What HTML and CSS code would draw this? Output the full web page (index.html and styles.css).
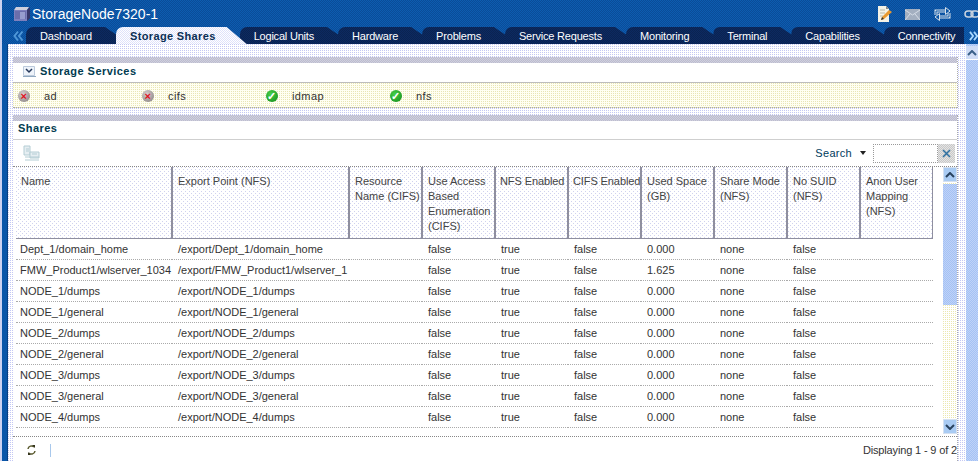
FILE: index.html
```html
<!DOCTYPE html>
<html lang="en">
<head>
<meta charset="utf-8">
<title>StorageNode7320-1</title>
<link rel="stylesheet" href="styles.css">
</head>
<body>
<div class="page">
  <header class="header">
    <div class="titlebar">
      <svg class="title-icon" width="18" height="16" viewBox="0 0 18 16"><path d="M1 4h13v11H1z" fill="#7d80bd"/><path d="M2 6h11M2 8h11M2 10h11M2 12h11" stroke="#5a5d9a"/><path d="M3 1h13l-2 3H1z" fill="#cfcfdc"/><path d="M14 4l3-3v11l-3 3z" fill="#35376a"/><path d="M7 6h5v7H7z" fill="#aab0dd" opacity=".7"/></svg>
      <h1 class="title">StorageNode7320-1</h1>
      <div class="title-tools">
        <svg width="16" height="18" viewBox="0 0 16 18"><path d="M1 1h8l3 3v13H1z" fill="#f4f2e6"/><path d="M9 1v3h3" fill="#888"/><path d="M3 5h5M3 8h5M3 11h3" stroke="#b8b8a8"/><path d="M4 15l1-3 7-7 3 2-8 7z" fill="#e89a30"/><path d="M4 15l1-3 2 2z" fill="#333"/></svg>
        <svg class="tool-mail" width="15" height="11" viewBox="0 0 15 11"><path d="M0 0h15v11H0z" fill="#a3afc0"/><path d="M0 1l7.500 5L15 1M0 11l5-6M15 11l-5-6" fill="none" stroke="#d4dce6"/></svg>
        <svg class="tool-sync" width="17" height="14" viewBox="0 0 17 14"><path d="M2 8V4h10M15 6v4H5" fill="none" stroke="#d6e0ea" stroke-width="3"/><path d="M2 8V4h10M15 6v4H5" fill="none" stroke="#0c56a6"/><path d="M11.500.500L16 4l-4.500 3.500zM5.500 6.500L1 10l4.500 3.500z" fill="#0c56a6" stroke="#d6e0ea"/></svg>
        <svg class="tool-link" width="14" height="8" viewBox="0 0 14 8"><rect x="1" y="1" width="8" height="6" rx="3" fill="none" stroke="#c9d3df" stroke-width="1.500"/><rect x="7" y="1" width="8" height="6" rx="3" fill="none" stroke="#c9d3df" stroke-width="1.500"/></svg>
      </div>
    </div>
    <nav class="tabbar">
      <svg class="tab-arrow" width="12" height="12" viewBox="0 0 12 12"><path d="M6 1.500L2.500 6 6 10.500M10.500 1.500L7 6l3.500 4.500" fill="none" stroke="#4f97d8" stroke-width="2"/></svg>
      <div class="tabs">
        <a class="tab">Dashboard</a>
        <a class="tab active">Storage Shares</a>
        <a class="tab">Logical Units</a>
        <a class="tab">Hardware</a>
        <a class="tab">Problems</a>
        <a class="tab">Service Requests</a>
        <a class="tab">Monitoring</a>
        <a class="tab">Terminal</a>
        <a class="tab">Capabilities</a>
        <a class="tab last">Connectivity</a>
      </div>
      <svg class="tab-arrow next" width="10" height="12" viewBox="0 0 11 12"><path d="M1 1.500L4.500 6 1 10.500M5.500 1.500L9 6l-3.500 4.500" fill="none" stroke="#a8d8ff" stroke-width="2"/></svg>
    </nav>
  </header>

  <div class="workspace">
    <div class="rail"></div>
    <main class="content">
      <section class="panel services">
        <div class="panel-cap"></div>
        <div class="panel-head">
          <svg class="collapse" width="13" height="11" viewBox="0 0 13 11"><path d="M.500.500h11v9H.500z" fill="#eef3fa" stroke="#bccadc"/><path d="M0 10.500h13" stroke="#8fa8c0"/><path d="M3 3l3 3 3-3" fill="none" stroke="#25385a" stroke-width="1.500"/></svg>
          <h2 class="panel-title">Storage Services</h2>
        </div>
        <div class="service-row">
          <div class="service"><span class="dot bad"><i>×</i></span>ad</div>
          <div class="service"><span class="dot bad"><i>×</i></span>cifs</div>
          <div class="service"><span class="dot ok"><i>✓</i></span>idmap</div>
          <div class="service"><span class="dot ok"><i>✓</i></span>nfs</div>
        </div>
      </section>

      <section class="panel shares">
        <div class="panel-cap"></div>
        <div class="panel-head shares-head"><h2 class="panel-title">Shares</h2></div>
        <div class="toolbar">
          <svg class="tool-icon" width="17" height="16" viewBox="0 0 17 16"><path d="M1 1h6v9H1z" fill="#e6eef2" stroke="#b4cdd4"/><path d="M7 7h9v6H7z" fill="#e6eef2" stroke="#b4cdd4"/><path d="M2 12h14M2 15h14M3 4h3M3 6h3M9 9h5" stroke="#b4cdd4"/></svg>
          <span class="search-label">Search</span>
          <span class="caret"></span>
          <span class="search-box"></span>
          <span class="search-clear"><svg width="9" height="9" viewBox="0 0 9 9"><path d="M1 1l7 7M8 1L1 8" stroke="#2f6f9f" stroke-width="1.600"/></svg></span>
        </div>
        <div class="table-area">
          <div class="table-wrap">
            <table class="grid">
              <colgroup>
                <col class="c-name"><col class="c-export"><col class="c-std"><col class="c-std"><col class="c-std"><col class="c-std"><col class="c-std"><col class="c-std"><col class="c-std"><col class="c-std">
              </colgroup>
              <thead>
                <tr>
                  <th>Name</th><th>Export Point (NFS)</th><th>Resource Name (CIFS)</th><th>Use Access Based Enumeration (CIFS)</th><th class="one-line">NFS Enabled</th><th class="one-line">CIFS Enabled</th><th>Used Space (GB)</th><th>Share Mode (NFS)</th><th>No SUID (NFS)</th><th>Anon User Mapping (NFS)</th>
                </tr>
              </thead>
              <tbody>
                <tr><td>Dept_1/domain_home</td><td>/export/Dept_1/domain_home</td><td></td><td>false</td><td>true</td><td>false</td><td>0.000</td><td>none</td><td>false</td><td></td></tr>
                <tr><td>FMW_Product1/wlserver_1034</td><td>/export/FMW_Product1/wlserver_1</td><td></td><td>false</td><td>true</td><td>false</td><td>1.625</td><td>none</td><td>false</td><td></td></tr>
                <tr><td>NODE_1/dumps</td><td>/export/NODE_1/dumps</td><td></td><td>false</td><td>true</td><td>false</td><td>0.000</td><td>none</td><td>false</td><td></td></tr>
                <tr><td>NODE_1/general</td><td>/export/NODE_1/general</td><td></td><td>false</td><td>true</td><td>false</td><td>0.000</td><td>none</td><td>false</td><td></td></tr>
                <tr><td>NODE_2/dumps</td><td>/export/NODE_2/dumps</td><td></td><td>false</td><td>true</td><td>false</td><td>0.000</td><td>none</td><td>false</td><td></td></tr>
                <tr><td>NODE_2/general</td><td>/export/NODE_2/general</td><td></td><td>false</td><td>true</td><td>false</td><td>0.000</td><td>none</td><td>false</td><td></td></tr>
                <tr><td>NODE_3/dumps</td><td>/export/NODE_3/dumps</td><td></td><td>false</td><td>true</td><td>false</td><td>0.000</td><td>none</td><td>false</td><td></td></tr>
                <tr><td>NODE_3/general</td><td>/export/NODE_3/general</td><td></td><td>false</td><td>true</td><td>false</td><td>0.000</td><td>none</td><td>false</td><td></td></tr>
                <tr><td>NODE_4/dumps</td><td>/export/NODE_4/dumps</td><td></td><td>false</td><td>true</td><td>false</td><td>0.000</td><td>none</td><td>false</td><td></td></tr>
              </tbody>
            </table>
          </div>
          <div class="vscroll">
            <span class="sb-btn"><svg width="10" height="6" viewBox="0 0 10 6"><path d="M1 5l4-4 4 4" fill="none" stroke="#29435f" stroke-width="2"/></svg></span>
            <span class="sb-thumb"></span>
            <span class="sb-track"></span>
            <span class="sb-btn"><svg width="10" height="6" viewBox="0 0 10 6"><path d="M1 1l4 4 4-4" fill="none" stroke="#29435f" stroke-width="2"/></svg></span>
          </div>
        </div>
        <footer class="table-footer">
          <svg class="refresh" width="9" height="12" viewBox="0 0 9 12"><path d="M1 5a3.500 3.500 0 0 1 6-2M8 7a3.500 3.500 0 0 1-6 2" fill="none" stroke="#5b5b30" stroke-width="1.500"/><path d="M5 1h3v3zM4 11H1V8z" fill="#33331c"/></svg>
          <span class="foot-sep"></span>
          <span class="paging">Displaying 1 - 9 of 2</span>
        </footer>
      </section>
    </main>
    <div class="outer-scroll">
      <span class="outer-btn"><svg width="10" height="6" viewBox="0 0 10 6"><path d="M1 5l4-4 4 4" fill="none" stroke="#3a5f88" stroke-width="2"/></svg></span>
    </div>
  </div>
</div>
</body>
</html>
```

FILE: styles.css
```css
* { box-sizing: border-box; }
html, body { margin: 0; padding: 0; }
body { width: 978px; height: 461px; overflow: hidden; font-family: "Liberation Sans", Arial, sans-serif; font-size: 11px; color: #333; background: #fff; }
.page { width: 978px; height: 461px; display: flex; flex-direction: column; }

.header { height: 44px; flex: none; border-left: 2px solid #cdd3f0; background: repeating-conic-gradient(#0a4c98 0 25%, #0d5cb0 0 50%) 0 0 / 2px 2px; }
.titlebar { height: 27px; display: flex; align-items: center; padding-left: 11px; padding-top: 1px; }
.title-icon { flex: none; }
.title { margin: 0 0 0 1px; font-size: 14px; font-weight: normal; color: #fff; }
.title-tools { margin-left: auto; display: flex; align-items: center; gap: 12px; }
.tool-sync { margin-left: 2px; }
.tool-link { margin-left: 1px; }

.tabbar { height: 17px; display: flex; align-items: stretch; }
.tab-arrow { width: 12px; flex: none; margin: 3px 2px 2px 10px; }
.tab-arrow.next { width: 10px; margin: 3px 0 2px 3px; }
.tabs { display: flex; flex: none; width: 940px; }
.tab { position: relative; display: block; flex: none; height: 17px; margin-right: -14px; padding: 2px 38px 0 14px; line-height: 14px; white-space: nowrap; color: #fff; letter-spacing: -.2px;
  background: repeating-conic-gradient(#0a2352 0 25%, #0d2a60 0 50%) 0 0 / 2px 2px;
  border-top-left-radius: 7px;
  clip-path: polygon(0 0, calc(100% - 25px) 0, 100% 100%, 0 100%);
}
.tab.active { z-index: 2; padding-right: 38px; color: #0a2f55; font-weight: bold; letter-spacing: .35px;
  background: repeating-conic-gradient(#dfe2fa 0 25%, #fff 0 50%) 0 0 / 2px 2px;
  clip-path: polygon(0 0, calc(100% - 27px) 0, calc(100% - 7px) 100%, 0 100%);
}
.tab.last { margin-right: 0; padding-right: 9px; clip-path: none; }

.workspace { flex: 1; display: flex; min-height: 0; background: #fff conic-gradient(from 270deg at 1px 1px, #c4c8f4 25%, transparent 0) 0 0 / 2px 2px; }
.rail { width: 8px; flex: none; background: #0a57a8; border-left: 2px solid #cdd3f0; border-right: 1px solid #07407f; }
.content { width: 958px; flex: none; padding: 13px 8px 0 5px; display: flex; flex-direction: column; gap: 7px; }

.outer-scroll { width: 12px; flex: none; background: repeating-conic-gradient(#a4c2f4 0 25%, #bfd2f8 0 50%) 0 0 / 2px 2px; }
.outer-btn { display: flex; justify-content: center; align-items: center; height: 14px; margin-top: 2px; background: #cfdcf6; border-bottom: 1px solid #fff; }

.panel { background: #fff; border-right: 1px dotted #aaa; }
.panel-cap { height: 6px; background: repeating-conic-gradient(#bcbccf 0 25%, #cfcfdd 0 50%) 0 0 / 2px 2px; }
.panel-head { height: 19px; display: flex; align-items: flex-start; gap: 4px; padding: 3px 0 0 10px; background: #fff; }
.collapse { flex: none; }
.panel-title { margin: 0; font-size: 11px; line-height: 11px; font-weight: bold; color: #003b50; letter-spacing: .45px; }
.service-row { height: 26px; display: flex; align-items: center; padding: 2px 0 0 5px; border-top: 1px solid #bdbdbd; border-bottom: 1px dotted #aaa; background: #fffff2 conic-gradient(from 270deg at 1px 1px, #e8e5b4 25%, transparent 0) 0 0 / 2px 2px; }
.service { width: 124px; flex: none; display: flex; align-items: center; gap: 14px; letter-spacing: .4px; }
.dot { width: 12px; height: 12px; flex: none; border-radius: 50%; display: flex; align-items: center; justify-content: center; font-weight: bold; }
.dot i { font-style: normal; font-size: 11px; line-height: 10px; }
.dot.bad { background: radial-gradient(circle at 40% 35%, #d8d0d0, #807a7a); color: #e0101c; }
.dot.ok { background: radial-gradient(circle at 40% 35%, #48d048, #108818); color: #fff; }

.shares { flex: 1; display: flex; flex-direction: column; min-height: 0; }
.shares-head { padding: 1px 0 0 5px; border-bottom: 1px solid #cfcfcf; }
.shares-head .panel-title { line-height: 13px; }
.toolbar { height: 27px; flex: none; display: flex; align-items: center; padding-left: 10px; border-bottom: 1px dotted #888; }
.tool-icon { flex: none; }
.search-label { margin-left: auto; color: #003b5c; letter-spacing: .3px; }
.caret { width: 0; height: 0; margin: 0 7px 0 8px; border: 3px solid transparent; border-top: 4px solid #222; border-bottom: 0; }
.search-box { width: 65px; height: 19px; background: #fff; border: 1px dotted #999; }
.search-clear { width: 17px; height: 19px; margin-right: 2px; display: flex; align-items: center; justify-content: center; background: repeating-conic-gradient(#c8c8c8 0 25%, #e4e4e4 0 50%) 0 0 / 2px 2px; }

.table-area { height: 269px; flex: none; display: flex; padding-left: 3px; }
.table-wrap { width: 917px; flex: none; overflow: hidden; }
.grid { width: 917px; table-layout: fixed; border-collapse: collapse; }
.c-name { width: 156px; }
.c-export { width: 177px; }
.c-std { width: 73px; }
.grid th { height: 71px; padding: 7px 0 0 5px; vertical-align: top; text-align: left; font-weight: normal; line-height: 15px; color: #444; border-right: 2px solid #8f8f9f; border-bottom: 1px solid #8f8f9f;
  background-color: #fff;
  background-image: conic-gradient(from 270deg at 1px 1px, #d0d2ee 25%, transparent 0), conic-gradient(from 270deg at 1px 1px, #d0d2ee 25%, transparent 0);
  background-size: 4px 4px;
  background-position: 0 0, 2px 2px; }
.grid th.one-line { padding-left: 4px; white-space: nowrap; letter-spacing: -.1px; }
.grid td { height: 21px; padding: 0 0 0 6px; white-space: nowrap; overflow: hidden; color: #333; border-bottom: 1px dotted #aaa; }
.grid td:first-child { padding-left: 4px; }
.vscroll { width: 14px; flex: none; margin: 0 0 2px 10px; display: flex; flex-direction: column; background: #fff conic-gradient(from 270deg at 1px 1px, #ebe8b0 25%, transparent 0) 0 0 / 2px 2px; }
.sb-btn { height: 15px; flex: none; display: flex; align-items: center; justify-content: center; background: #a9cbf3; border: 1px solid #d4e0f0; }
.sb-thumb { height: 121px; flex: none; margin-top: 2px; background: repeating-conic-gradient(#a4c2f4 0 25%, #bfd2f8 0 50%) 0 0 / 2px 2px; }
.sb-track { flex: 1; }

.table-footer { height: 25px; flex: none; display: flex; align-items: center; padding: 2px 0 0 14px; border-top: 1px dotted #888; }
.refresh { flex: none; }
.foot-sep { width: 1px; height: 13px; margin-left: 14px; background: #a8c8ec; }
.paging { margin-left: auto; color: #333; letter-spacing: -.15px; }
```
